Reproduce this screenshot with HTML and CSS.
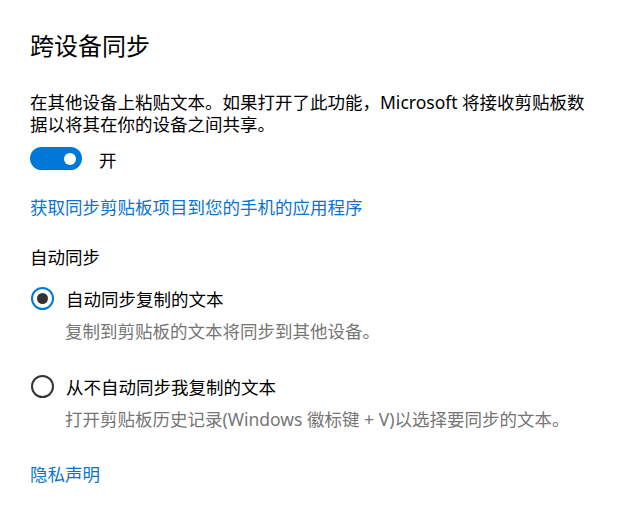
FILE: index.html
```html
<!DOCTYPE html>
<html lang="zh-CN">
<head>
<meta charset="utf-8">
<title>跨设备同步</title>
<link rel="stylesheet" href="styles.css">
</head>
<body>
<main class="page">
  <h1 class="title">跨设备同步</h1>
  <p class="desc">在其他设备上粘贴文本。如果打开了此功能，Microsoft 将接收剪贴板数据以将其在你的设备之间共享。</p>
  <div class="toggle-row">
    <span class="toggle"><span class="knob"></span></span>
    <span class="toggle-label">开</span>
  </div>
  <a class="link link-app" href="#">获取同步剪贴板项目到您的手机的应用程序</a>
  <div class="group-label">自动同步</div>
  <div class="option option-first">
    <div class="radio-row">
      <span class="radio checked"><span class="dot"></span></span>
      <span class="radio-text">自动同步复制的文本</span>
    </div>
    <div class="hint">复制到剪贴板的文本将同步到其他设备。</div>
  </div>
  <div class="option">
    <div class="radio-row">
      <span class="radio"></span>
      <span class="radio-text">从不自动同步我复制的文本</span>
    </div>
    <div class="hint">打开剪贴板历史记录(Windows 徽标键 + V)以选择要同步的文本。</div>
  </div>
  <a class="link link-privacy" href="#">隐私声明</a>
</main>
</body>
</html>
```
FILE: styles.css
```css
html, body {
  margin: 0;
  padding: 0;
  background: #ffffff;
}

body {
  font-family: "Segoe UI", "Noto Sans", "Noto Sans CJK SC", sans-serif;
  color: #000000;
  font-size: 17.5px;
  line-height: 22px;
}

.page {
  width: 560px;
  padding: 30px 0 0 30px;
  display: flex;
  flex-direction: column;
  align-items: flex-start;
}

.title {
  margin: 0;
  font-size: 24px;
  line-height: 32px;
  font-weight: 400;
}

.desc {
  margin: 29px 0 0 0;
  width: 560px;
}

.toggle-row {
  margin-top: 12px;
  display: flex;
  align-items: center;
  gap: 17px;
}

.toggle {
  width: 52px;
  height: 23px;
  border-radius: 12px;
  background: #0078d7;
  display: flex;
  align-items: center;
  justify-content: flex-end;
  padding-right: 6px;
  box-sizing: border-box;
}

.knob {
  width: 12px;
  height: 12px;
  border-radius: 50%;
  background: #ffffff;
}

.toggle-label {
  position: relative;
  top: 1px;
}

.link {
  color: #0a74d0;
  text-decoration: none;
}

.link-app {
  margin-top: 26px;
}

.group-label {
  margin-top: 28px;
}

.option {
  margin-top: 33px;
  display: flex;
  flex-direction: column;
}

.option-first {
  margin-top: 19px;
}

.radio-row {
  display: flex;
  align-items: center;
  gap: 12px;
  padding-left: 1px;
}

.radio {
  width: 23px;
  height: 23px;
  box-sizing: border-box;
  border: 2.4px solid #333333;
  border-radius: 50%;
  display: flex;
  align-items: center;
  justify-content: center;
}

.radio.checked {
  border-color: #0078d7;
}

.dot {
  width: 11px;
  height: 11px;
  border-radius: 50%;
  background: #333333;
}

.hint {
  margin-top: 10px;
  padding-left: 35px;
  color: #767676;
}

.link-privacy {
  margin-top: 33px;
}
```
